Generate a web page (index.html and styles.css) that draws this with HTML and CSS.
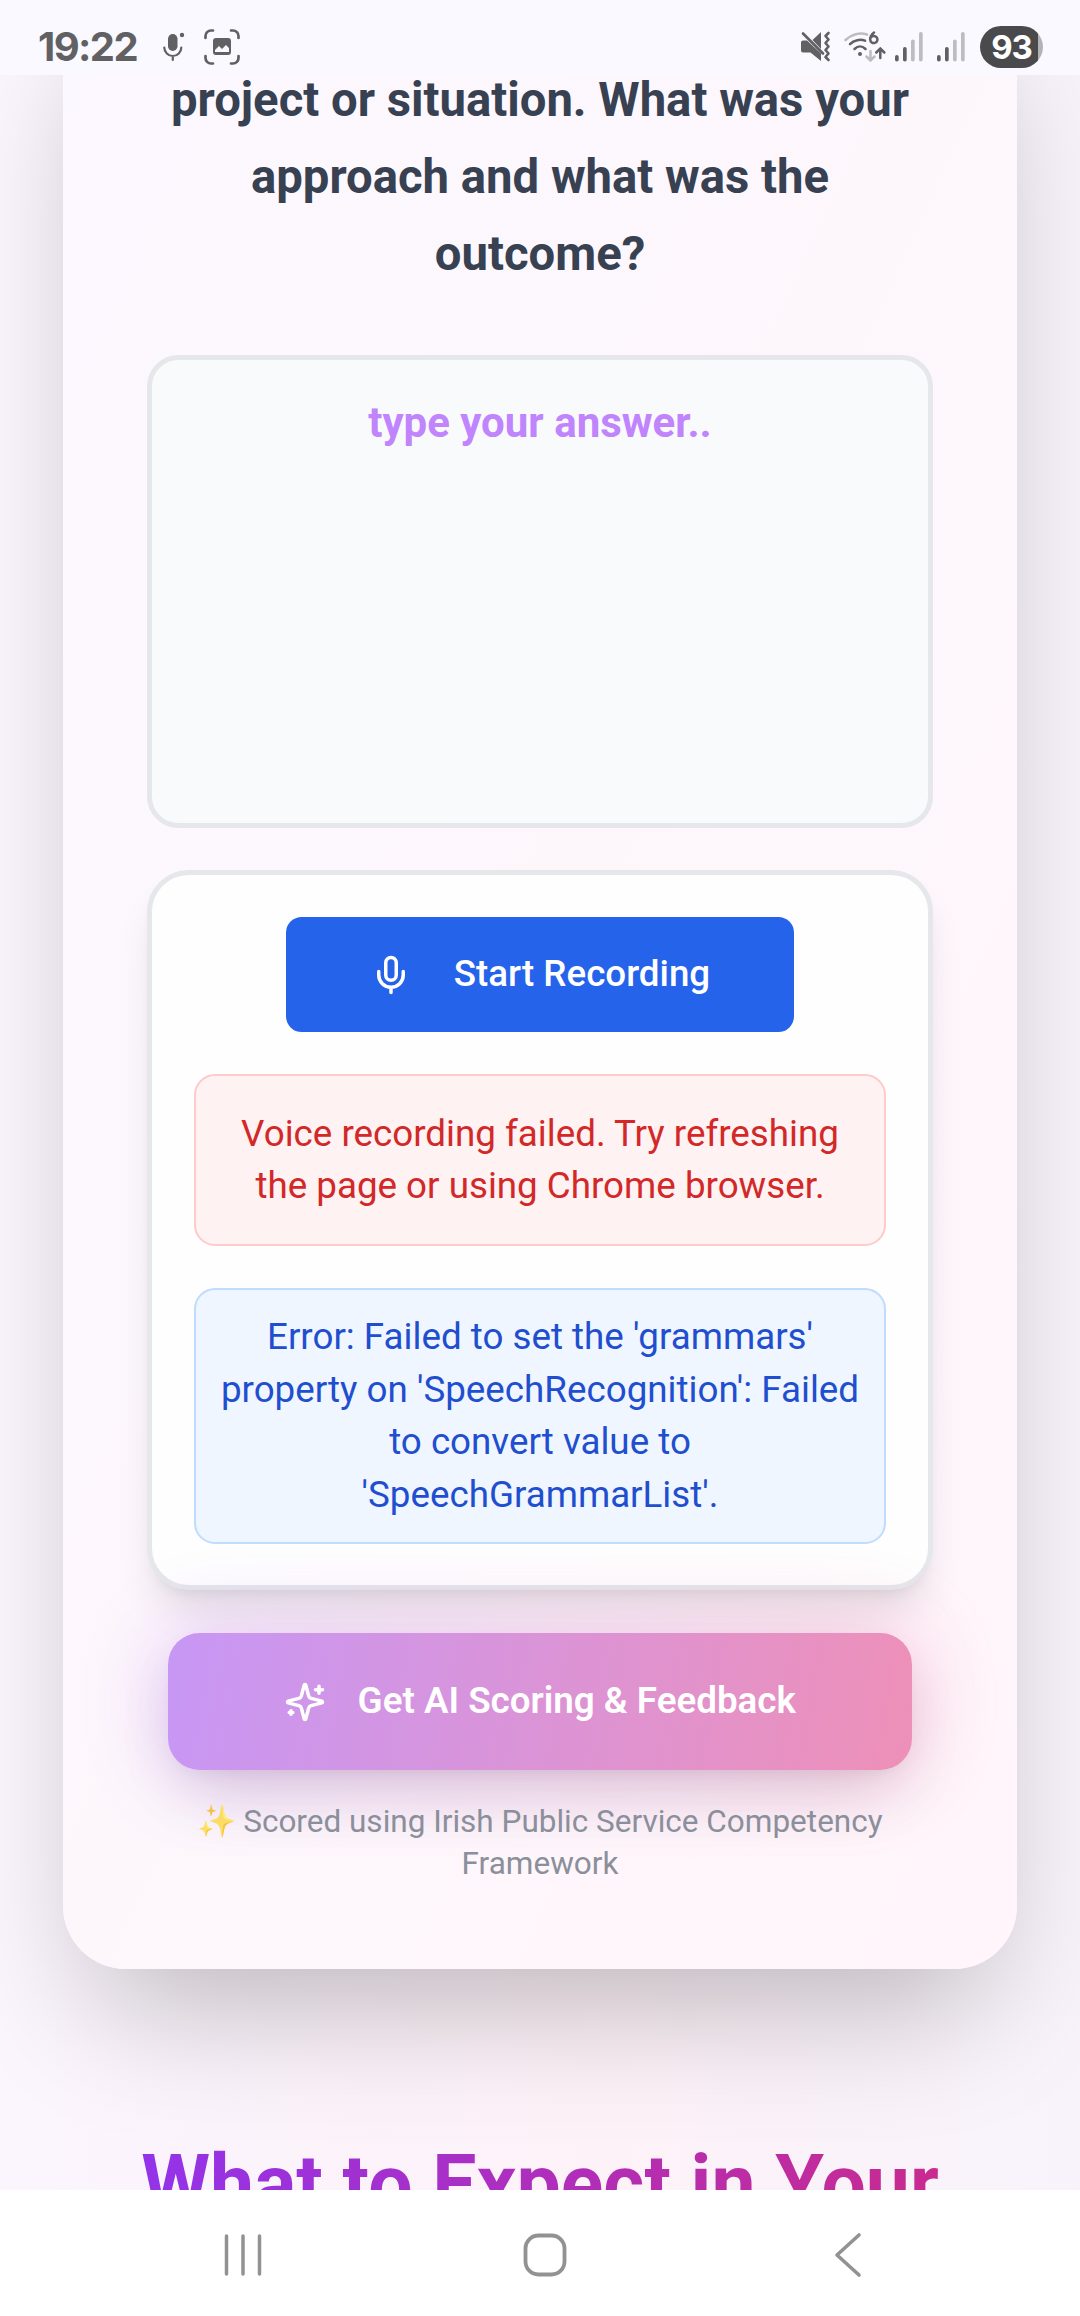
FILE: index.html
```html
<!DOCTYPE html>
<html lang="en">
<head>
<meta charset="utf-8">
<title>Interview Practice</title>
<link rel="stylesheet" href="styles.css">
</head>
<body>
<header class="status">
  <div class="status-left">
    <span class="clock">19:22</span>
    <svg class="s-mic" width="22" height="30" viewBox="0 0 22 30" fill="none" stroke="#616164" stroke-width="2.2" stroke-linecap="round"><rect x="5" y="2" width="9.500" height="17" rx="4.700" fill="#616164" stroke="none"/><path d="M1.300 15.500a8.500 8.500 0 0 0 17 0M9.800 24v4"/><circle cx="19" cy="3" r="2.200" fill="#616164" stroke="none"/></svg>
    <svg class="s-shot" width="36" height="36" viewBox="0 0 36 36" fill="none" stroke="#616164" stroke-width="2.700" stroke-linecap="round"><path d="M1.500 9V7a5.500 5.500 0 0 1 5.500-5.500h2M27 1.500h2A5.500 5.500 0 0 1 34.500 7v2M34.500 27v2a5.500 5.500 0 0 1-5.500 5.500h-2M9 34.500H7A5.500 5.500 0 0 1 1.500 29v-2"/><path fill="#616164" stroke="none" fill-rule="evenodd" d="M12 9h12a3 3 0 0 1 3 3v11a3 3 0 0 1-3 3H12a3 3 0 0 1-3-3V12a3 3 0 0 1 3-3Zm-1 14h14v-4l-3-3-4 4-3-3-4 4Z"/></svg>
  </div>
  <div class="status-right">
    <svg width="32" height="32" viewBox="0 0 32 32" fill="none" stroke="#616164" stroke-linecap="round"><path fill="#616164" stroke="none" d="M3 9.500h4l14 13v7.500L10.500 21.500H3a2 2 0 0 1-2-2v-8a2 2 0 0 1 2-2ZM21 1v17l-8.500-9Z"/><path stroke-width="2.600" d="M3 2.500l20 20"/><path stroke-width="2.600" stroke-linejoin="round" d="M28.500 2l-3 3 3 3.500-3 3.500 3 3.500-3 3.500 3 3.500-3 3.500 3 3"/></svg>
    <svg class="s-wifi" width="42" height="32" viewBox="0 0 42 32" fill="none" stroke-linecap="round" stroke-width="2.500"><path stroke="#bdbdc1" d="M1.500 9C7 3.500 16 .8 23 3.500"/><path stroke="#616164" d="M6 13.200c4-4.400 10.500-5.200 15-3.500M10.500 18c3.500-3.500 7.500-3.500 11 0"/><circle cx="16" cy="23" r="2" fill="#616164"  stroke="none"/><path stroke="#616164" d="M30 1.500c-3 2.500-4 5-3.800 7a3.600 3.600 0 1 0 .6-2"/><path stroke="#bdbdc1" d="M26.500 20v9m-4-3.500 4 4 4-4"/><path stroke="#616164" d="M36.300 27v-9m-4 3.500 4-4 4 4"/></svg>
    <svg class="s-bars" width="28" height="30" viewBox="0 0 28 30"><g fill="#616164"><rect y="23" width="3.700" height="6.500" rx="1.800"/><rect x="8" y="15" width="3.700" height="14.500" rx="1.800"/></g><g fill="#bdbdc1"><rect x="16" y="7.500" width="3.700" height="22" rx="1.800"/><rect x="24" width="3.700" height="29.500" rx="1.800"/></g></svg>
    <svg class="s-bars2" width="28" height="30" viewBox="0 0 28 30"><g fill="#616164"><rect y="23" width="3.700" height="6.500" rx="1.800"/><rect x="8" y="15" width="3.700" height="14.500" rx="1.800"/></g><g fill="#bdbdc1"><rect x="16" y="7.500" width="3.700" height="22" rx="1.800"/><rect x="24" width="3.700" height="29.500" rx="1.800"/></g></svg>
    <span class="battery">93</span>
  </div>
</header>
<main class="viewport">
  <section class="card">
    <p class="question">project or situation. What was your approach and what was the outcome?</p>
    <div class="answer">type your answer..</div>
    <div class="recorder">
      <button class="record"><svg width="42" height="42" viewBox="0 0 24 24" fill="none" stroke="currentColor" stroke-width="2" stroke-linecap="round" stroke-linejoin="round"><path d="M12 2a3 3 0 0 0-3 3v7a3 3 0 0 0 6 0V5a3 3 0 0 0-3-3Z"/><path d="M19 10v2a7 7 0 0 1-14 0v-2M12 19v3"/></svg><span>Start Recording</span></button>
      <p class="alert alert-error">Voice recording failed. Try refreshing the page or using Chrome browser.</p>
      <p class="alert alert-info">Error: Failed to set the 'grammars' property on 'SpeechRecognition': Failed to convert value to 'SpeechGrammarList'.</p>
    </div>
    <div class="score-wrap">
      <button class="score"><svg width="42" height="42" viewBox="0 0 24 24" fill="none" stroke="currentColor" stroke-width="2" stroke-linecap="round" stroke-linejoin="round"><path d="M9.937 15.500A2 2 0 0 0 8.500 14.063l-6.135-1.582a.5.5 0 0 1 0-.962L8.500 9.936A2 2 0 0 0 9.937 8.500l1.582-6.135a.5.5 0 0 1 .963 0L14.063 8.500A2 2 0 0 0 15.500 9.937l6.135 1.581a.5.5 0 0 1 0 .964L15.500 14.063a2 2 0 0 0-1.437 1.437l-1.582 6.135a.5.5 0 0 1-.963 0z"/><path d="M20 3v4M22 5h-4M4 17v2M5 18H3"/></svg><span>Get AI Scoring &amp; Feedback</span></button>
    </div>
    <p class="note"><span class="emoji">✨</span> Scored using Irish Public Service Competency Framework</p>
  </section>
  <h2 class="heading">What to Expect in Your</h2>
</main>
<nav class="navbar">
  <svg width="42" height="44" viewBox="0 0 42 44" stroke="#929292" stroke-width="3.500" stroke-linecap="round"><path d="M3.500 3v38M20 3v38M36.500 3v38"/></svg>
  <svg width="46" height="46" viewBox="0 0 46 46" fill="none" stroke="#929292" stroke-width="3.800"><rect x="3.500" y="3.500" width="39" height="39" rx="13"/></svg>
  <svg width="30" height="46" viewBox="0 0 30 46" fill="none" stroke="#929292" stroke-width="3.600" stroke-linecap="round" stroke-linejoin="round"><path d="M26 3 4 23l22 20"/></svg>
</nav>
</body>
</html>
```
FILE: styles.css
```css
* { box-sizing: border-box; margin: 0; padding: 0; }
body {
  width: 1080px;
  height: 2316px;
  display: flex;
  flex-direction: column;
  overflow: hidden;
  font-family: Roboto, sans-serif;
  background: #fff;
}
button { border: 0; font: inherit; color: #fff; }

.status {
  height: 75px;
  flex: none;
  display: flex;
  justify-content: space-between;
  padding: 19px 37px 0 38px;
  background: #faf9ff;
  font-family: Inter, sans-serif;
}
.status-left, .status-right { display: flex; align-items: center; height: 56px; }
.clock { padding-bottom: 1px; font-size: 40px; font-weight: 700; letter-spacing: -1.6px; color: #616164; }
.s-mic { margin-left: 26px; }
.s-shot { margin-left: 19px; }
.s-wifi { margin-left: 12px; }
.s-bars { margin-left: 9px; }
.s-bars2 { margin-left: 14px; }
.battery {
  width: 63px;
  height: 42px;
  margin-left: 15px;
  border-radius: 21px;
  text-align: center;
  font-size: 33px;
  line-height: 42px;
  font-weight: 700;
  letter-spacing: -1px;
  color: #fff;
  background: linear-gradient(90deg, #4a4a4c 58px, #b3b3b6 58px);
}

.viewport {
  height: 2115px;
  flex: none;
  overflow: hidden;
  padding: 0 63px;
  background: linear-gradient(90deg, #fbf5fe 0%, #fdf2f8 55%, #f8f3fb 100%);
}
.card {
  height: 1994px;
  margin-top: -100px;
  padding: 87px 84px 0;
  display: flex;
  flex-direction: column;
  align-items: center;
  border-radius: 63px;
  text-align: center;
  background: linear-gradient(115deg, #fcf8ff 0%, #fdf7fc 50%, #fff5fa 100%);
  box-shadow: 0 66px 131px -31px rgba(0, 0, 0, .25);
}
.question {
  flex: none;
  width: 744px;
  font-size: 47.25px;
  line-height: 76.8px;
  font-weight: 700;
  color: #374151;
}
.answer {
  flex: none;
  width: 786px;
  height: 473px;
  margin-top: 63px;
  padding-top: 38px;
  border: 5px solid #e5e7eb;
  border-radius: 31.5px;
  font-size: 42px;
  line-height: 50px;
  font-weight: 700;
  color: #c084fc;
  background: #f9fafc;
}
.recorder {
  flex: none;
  width: 786px;
  height: 720px;
  margin-top: 42px;
  padding: 42px;
  display: flex;
  flex-direction: column;
  align-items: center;
  gap: 42px;
  border: 5px solid #e5e7eb;
  border-radius: 42px;
  background: #fefefe;
  box-shadow: 0 26px 39px -8px rgba(0, 0, 0, .1), 0 10px 16px -10px rgba(0, 0, 0, .1);
}
.record {
  height: 115px;
  flex: none;
  padding: 0 84px;
  display: flex;
  align-items: center;
  gap: 42px;
  border-radius: 15.75px;
  font-size: 36.75px;
  font-weight: 500;
  background: #2563eb;
}
.record span, .score span { padding-bottom: 2px; }
.alert {
  width: 692px;
  flex: none;
  border: 2px solid;
  border-radius: 21px;
  font-size: 36.75px;
  line-height: 52.5px;
}
.alert-error {
  height: 172px;
  padding: 31.4px 40px;
  color: #d32828;
  border-color: #fecaca;
  background: #fef2f2;
}
.alert-info {
  height: 256px;
  padding: 21px;
  color: #1f4ecf;
  border-color: #bfdbfe;
  background: #eff6ff;
}
.score-wrap {
  flex: none;
  position: relative;
  width: 744px;
  height: 137px;
  margin-top: 43px;
}
.score-wrap::before {
  content: "";
  position: absolute;
  inset: -6px;
  border-radius: 42px;
  background: linear-gradient(90deg, #9333ea, #db2777);
  filter: blur(42px);
  opacity: .23;
}
.score-wrap::after {
  content: "";
  position: absolute;
  inset: 0;
  border-radius: 31.5px;
  background: linear-gradient(100deg, #c797f5, #ee90b8);
  box-shadow: 0 33px 66px -16px rgba(60, 20, 60, .14), 0 8px 16px -6px rgba(0, 0, 0, .05);
}
.score {
  position: relative;
  z-index: 1;
  width: 100%;
  height: 100%;
  display: flex;
  align-items: center;
  justify-content: center;
  gap: 31.5px;
  font-size: 36.75px;
  font-weight: 600;
  background: none;
}
.note {
  position: relative;
  width: 700px;
  margin-top: 31px;
  font-size: 31.5px;
  line-height: 42px;
  color: #8b8f9b;
}
.emoji { margin-right: -1px; opacity: .75; }
.heading {
  margin-top: 166px;
  text-align: center;
  font-size: 78.75px;
  line-height: 98px;
  font-weight: 700;
  white-space: nowrap;
  color: transparent;
  background: linear-gradient(90deg, #9333ea 8%, #c92a8f 92%);
  background-clip: text;
}

.navbar {
  height: 126px;
  flex: none;
  display: flex;
  justify-content: space-between;
  align-items: center;
  padding: 4px 217px 0 223px;
  background: #fff;
}
.navbar svg:nth-child(2) { margin-right: 8px; }
```
